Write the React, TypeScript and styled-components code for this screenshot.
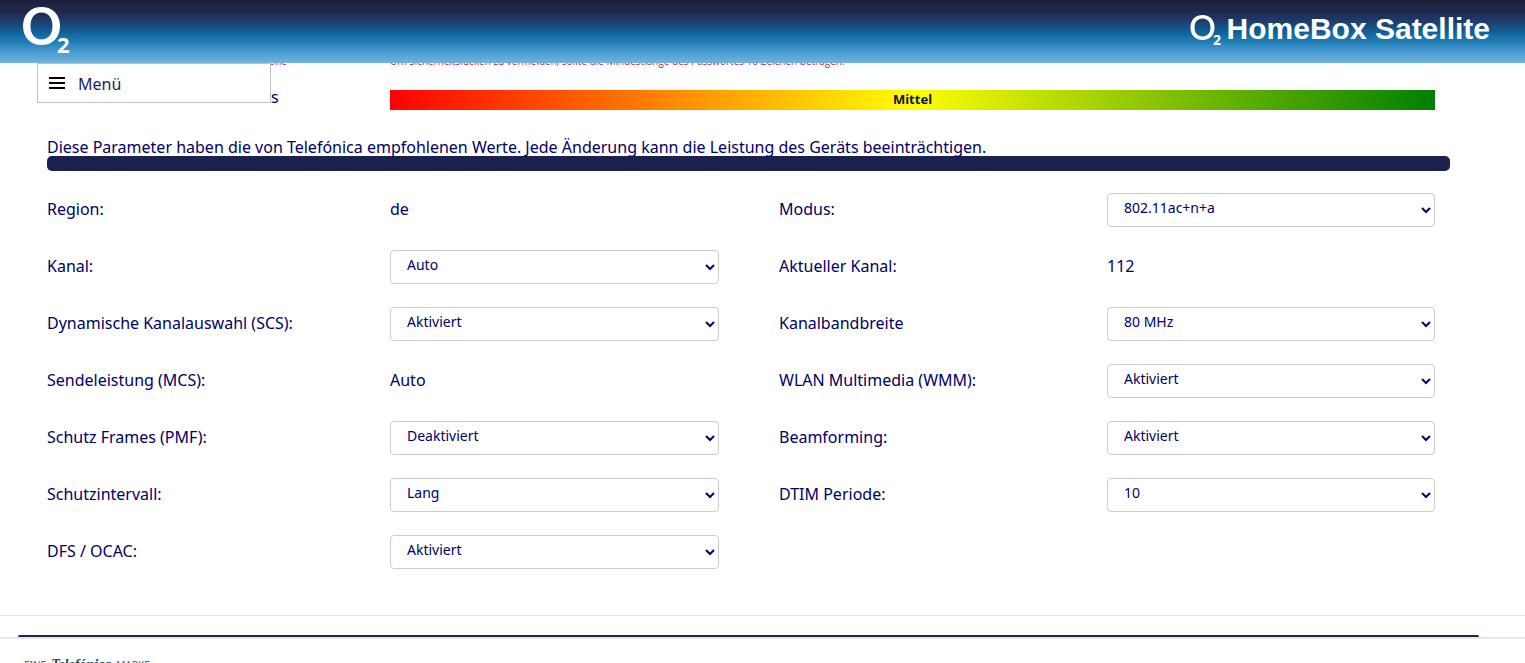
import React, { useId } from "react";
import styled, { createGlobalStyle } from "styled-components";

const GlobalStyle = createGlobalStyle`
  *, *::before, *::after { box-sizing: border-box; }
  body {
    margin: 0;
    background: #fff;
    color: #000066;
    font-family: "Noto Sans", "Open Sans", sans-serif;
    font-size: 16px;
    line-height: 20px;
  }
`;

const Page = styled.div`
  height: 100vh;
  overflow: hidden;
`;

const TopBar = styled.header`
  position: fixed;
  top: 0;
  left: 0;
  right: 0;
  z-index: 2;
  height: 63px;
  padding: 0 35px 0 22px;
  display: flex;
  justify-content: space-between;
  align-items: flex-start;
  background: linear-gradient(
    #1b1e38 0%,
    #1f2a52 20%,
    #1f3d6c 34%,
    #0f5f96 50%,
    #2380b8 68%,
    #4a9bce 82%,
    #72b3dd 100%
  );
`;

const HomeLink = styled.a`
  display: block;
  padding-top: 6px;
`;

const Product = styled.h1`
  margin: 0;
  padding-top: 14px;
  display: flex;
  gap: 3px;
  color: #fff;
  font: bold 30px/30px "Liberation Sans", Arial, sans-serif;
`;

const Logo = styled.svg`
  display: block;
  fill: #fff;
  font-family: "Open Sans", sans-serif;
  font-weight: bold;
`;

const MenuButton = styled.button`
  position: fixed;
  top: 63px;
  left: 37px;
  z-index: 3;
  width: 234px;
  height: 40px;
  padding: 1px 11px 0;
  display: flex;
  align-items: center;
  gap: 13px;
  border: 1px solid #bfbfc4;
  background: #fff;
  color: #1f1a6b;
  font: 16px/20px "Noto Sans", sans-serif;
  text-align: left;
`;

const Content = styled.main`
  padding: 53px 90px 46px 47px;
`;

const StrengthGrid = styled.div`
  display: grid;
  grid-template-columns: 343fr 1045fr;
  align-items: start;
`;

const Hint = styled.p<{ $width?: number }>`
  margin: 0;
  width: ${(p) => (p.$width ? p.$width + "px" : "auto")};
  text-align: ${(p) => (p.$width ? "right" : "left")};
  color: #c8203c;
  font: 10px/16px "Open Sans", sans-serif;
`;

const StrengthLabel = styled.span`
  padding-top: 18px;
  white-space: nowrap;
`;

const Strength = styled.div`
  margin-top: 21px;
  height: 20px;
  background: linear-gradient(to right, red, yellow, green);
  color: #111133;
  font: bold 13px/18px "Noto Sans", sans-serif;
  text-align: center;
`;

const Notice = styled.p`
  margin: 28px 0 0;
  line-height: 18px;
`;

const Divider = styled.div`
  height: 15px;
  margin-right: -15px;
  border-radius: 5px;
  background: #1a214d;
`;

const Form = styled.form`
  padding-top: 22px;
  display: grid;
  grid-template-columns: 343fr 329fr 60fr 328fr 328fr;
  grid-auto-rows: 34px;
  row-gap: 23px;
`;

const Label = styled.label<{ $second?: boolean }>`
  grid-column: ${(p) => (p.$second ? 4 : 1)};
  padding-top: 6px;
`;

const Value = styled.output<{ $second?: boolean }>`
  grid-column: ${(p) => (p.$second ? 5 : 2)};
  padding-top: 6px;
`;

const Select = styled.select<{ $second?: boolean }>`
  grid-column: ${(p) => (p.$second ? 5 : 2)};
  width: 100%;
  height: 34px;
  padding: 3px 1px 9px 12px;
  border: 1px solid #ccc;
  border-radius: 4px;
  background: #fff;
  color: #000066;
  font: 14px/20px "Noto Sans", sans-serif;
`;

const Footer = styled.footer`
  border-top: 1px solid #e7e7e7;
`;

const FooterStrip = styled.div`
  margin-top: 19px;
  padding: 0 46px 0 18px;
  border-bottom: 2px solid #e7e7ea;
`;

const FooterRule = styled.div`
  height: 2px;
  border-radius: 3px 3px 0 0;
  background: #1a2748;
`;

const Brand = styled.p`
  margin: 0;
  padding: 16px 0 0 24px;
  display: flex;
  align-items: baseline;
  gap: 5px;
  color: #2f6f77;
  font: 10px/20px "Noto Sans", sans-serif;
`;

const Script = styled.em`
  color: #0d4a5c;
  font: italic bold 14px/20px "Liberation Serif", serif;
`;

interface Setting {
  label: string;
  value: string;
  options?: string[];
}

const toggle = ["Aktiviert", "Deaktiviert"];

const rows: [Setting, Setting?][] = [
  [
    { label: "Region:", value: "de" },
    { label: "Modus:", value: "802.11ac+n+a", options: ["802.11ac+n+a"] },
  ],
  [
    { label: "Kanal:", value: "Auto", options: ["Auto"] },
    { label: "Aktueller Kanal:", value: "112" },
  ],
  [
    { label: "Dynamische Kanalauswahl (SCS):", value: "Aktiviert", options: toggle },
    { label: "Kanalbandbreite", value: "80 MHz", options: ["80 MHz"] },
  ],
  [
    { label: "Sendeleistung (MCS):", value: "Auto" },
    { label: "WLAN Multimedia (WMM):", value: "Aktiviert", options: toggle },
  ],
  [
    { label: "Schutz Frames (PMF):", value: "Deaktiviert", options: toggle },
    { label: "Beamforming:", value: "Aktiviert", options: toggle },
  ],
  [
    { label: "Schutzintervall:", value: "Lang", options: ["Lang"] },
    { label: "DTIM Periode:", value: "10", options: ["10"] },
  ],
  [{ label: "DFS / OCAC:", value: "Aktiviert", options: toggle }],
];

function Field({ setting, second }: { setting: Setting; second?: boolean }) {
  const id = useId();
  return (
    <>
      <Label htmlFor={id} $second={second}>{setting.label}</Label>
      {setting.options ? (
        <Select id={id} defaultValue={setting.value} $second={second}>
          {setting.options.map((o) => <option key={o}>{o}</option>)}
        </Select>
      ) : (
        <Value id={id} $second={second}>{setting.value}</Value>
      )}
    </>
  );
}

export default function App() {
  return (
    <Page>
      <GlobalStyle />
      <TopBar>
        <HomeLink href="#" aria-label="Startseite">
          <Logo width="50" height="50" viewBox="0 0 50 50">
            <path
              fillRule="evenodd"
              d="M19.500 1C30.500 1 38 8.500 38 20S30.500 39 19.500 39 1 31.500 1 20 8.500 1 19.500 1ZM19.500 6.500C12.500 6.500 8.500 12 8.500 20S12.500 33.500 19.500 33.500 30.500 28 30.500 20 26.500 6.500 19.500 6.500Z"
            />
            <text x="35" y="47" fontSize="22">2</text>
          </Logo>
        </HomeLink>
        <Product>
          <Logo width="34" height="34" viewBox="0 0 34 34">
            <path
              fillRule="evenodd"
              d="M12.500 1C20 1 24.500 6 24.500 13.500S20 26 12.500 26 .5 21 .5 13.500 5 1 12.500 1ZM12.500 4.500C7.500 4.500 4.500 8 4.500 13.500S7.500 22.500 12.500 22.500 20.500 19 20.500 13.500 17.500 4.500 12.500 4.500Z"
            />
            <text x="23" y="31" fontSize="14">2</text>
          </Logo>
          HomeBox Satellite
        </Product>
      </TopBar>
      <MenuButton type="button">
        <svg width="16" height="14" viewBox="0 0 16 14" aria-hidden="true">
          <path d="M0 1h16M0 6h16M0 11h16" stroke="#000" strokeWidth="2" />
        </svg>
        Menü
      </MenuButton>

      <Content>
        <StrengthGrid>
          <Hint $width={240}>Zone</Hint>
          <Hint>
            Um Sicherheitslücken zu vermeiden, sollte die Mindestlänge des Passwortes 10 Zeichen betragen.
          </Hint>
          <StrengthLabel>Sicherheitsstufe des Passworts</StrengthLabel>
          <Strength>Mittel</Strength>
        </StrengthGrid>
        <Notice>
          Diese Parameter haben die von Telefónica empfohlenen Werte. Jede Änderung kann die Leistung des Geräts beeinträchtigen.
        </Notice>
        <Divider />
        <Form>
          {rows.map(([first, second]) => (
            <React.Fragment key={first.label}>
              <Field setting={first} />
              {second && <Field setting={second} second />}
            </React.Fragment>
          ))}
        </Form>
      </Content>

      <Footer>
        <FooterStrip>
          <FooterRule />
        </FooterStrip>
        <Brand>
          EINE <Script>Telefónica</Script> MARKE
        </Brand>
      </Footer>
    </Page>
  );
}
